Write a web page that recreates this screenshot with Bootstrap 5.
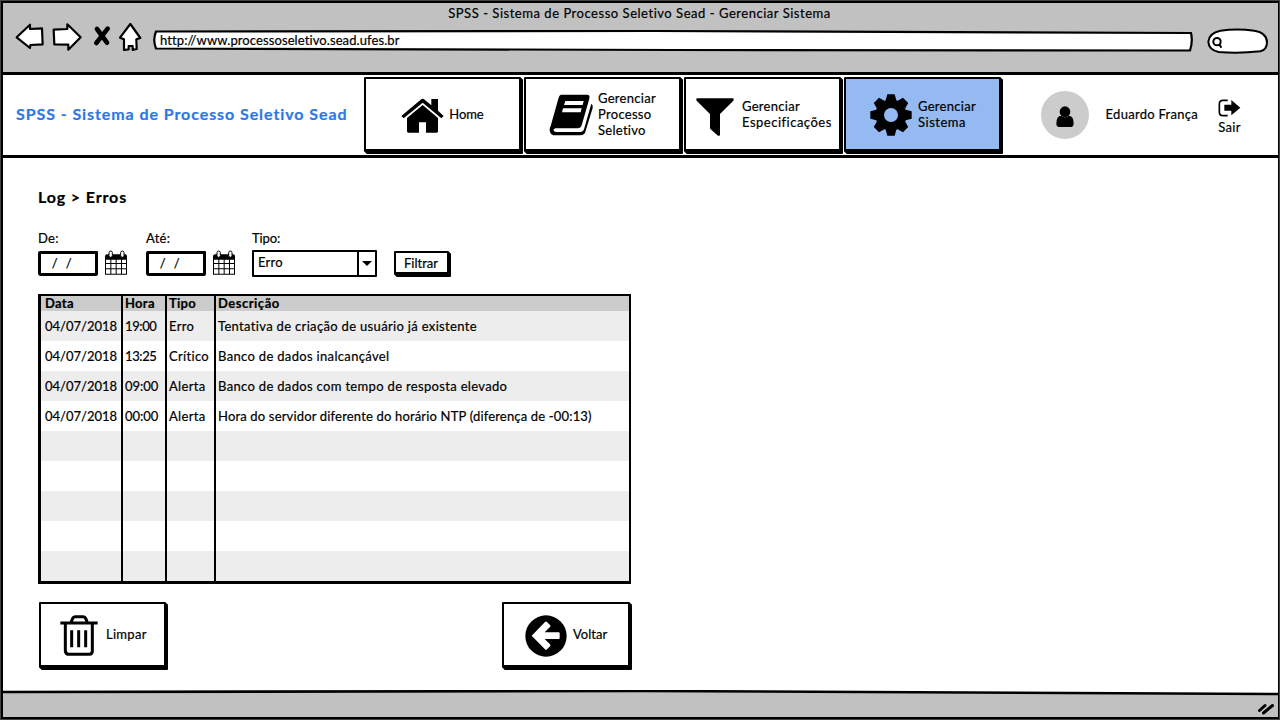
<!DOCTYPE html>
<html lang="pt-BR">
<head>
<meta charset="utf-8">
<meta name="viewport" content="width=device-width, initial-scale=1">
<title>SPSS - Gerenciar Sistema</title>
<link href="https://cdn.jsdelivr.net/npm/bootstrap@5.3.0/dist/css/bootstrap.min.css" rel="stylesheet">
<style>
  body{font-family:Lato,"Liberation Sans",sans-serif;font-size:13px;line-height:16px;color:#000;letter-spacing:.28px;font-variant-ligatures:none;-webkit-text-stroke:.2px currentColor;overflow:hidden}
  svg{display:block;flex:none}
  .mock-window{width:1280px;height:720px;border:2px solid #000;border-top-width:3px;border-left-width:3px;border-bottom-width:3px;outline:1px solid #444;outline-offset:-1px}
  .chrome{height:69px;background:#c1c1c1}
  .chrome-title{letter-spacing:.53px;padding:2px 2px 1px 0}
  .chrome-row{height:34px;padding-left:12px}
  .url-box{width:1040px;height:23px;margin:7px 0 0 11px;padding:3px 0 0 7px;letter-spacing:.1px}
  .search-pill{margin:6px 9px 0 auto}
  .top-nav{height:86px;border-top:3px solid #000;border-bottom:3px solid #000}
  .brand-text{width:361px;padding:0 0 2px 13px;font-size:16px;font-weight:700;color:#2b78e4;letter-spacing:.92px;line-height:20px}
  .sketch{border:2px solid #000;background:#fff;box-shadow:1px 1px 0 #000,2px 2px 0 #000;border-radius:1px;color:#000;border-bottom-width:3px}
  .nav-tile{width:157px;height:75px;margin:2px 3px 0 0}
  .nav-tile.current{background:#95baf1}
  .avatar{width:48px;height:48px;background:#ccc;margin-top:1px}
  .wide{letter-spacing:.5px}
  .snug{letter-spacing:-.1px}
  .tight{letter-spacing:-.4px}
  .content-area{height:535px;padding:30px 0 0 35px}
  .page-title{font-size:16px;line-height:20px;letter-spacing:.87px;font-weight:700;margin:-1px 0 23px}
  .field-label{margin-bottom:4px}
  .date-field .field-label{margin-bottom:5px}
  .date-field,.cal{margin-bottom:1px}
  .date-box{width:60px;height:25px;border:3px solid #000;padding:1px 0 0 7px;letter-spacing:.5px;border-radius:2px 1px 2px 3px;white-space:pre}
  .select-box{width:125px;height:27px;border:2px solid #000;border-radius:1px}
  .select-box .arrow-cell{width:18px;border-left:2px solid #000}
  .filter-btn{width:55px;height:24px;letter-spacing:0;padding:2px 1px 0 0!important;margin:0 0 2px 17px}
  .log-grid{width:593px;height:290px;border:3px solid #000;border-width:2px 2px 3px 3px;border-collapse:separate;border-spacing:0;margin-top:17px;table-layout:fixed}
  .log-grid th{background:#ccc;height:15px;padding:0 0 0 2px;line-height:15px}
  .log-grid td{height:30px;padding:0 0 0 2px;white-space:nowrap;letter-spacing:.33px}
  .log-grid tr:nth-child(odd) td{background:#ededed}
  .log-grid th+th,.log-grid td+td{border-left:2px solid #000}
  .log-grid td:first-child,.log-grid th:first-child{padding-left:4px}
  .log-grid .num{letter-spacing:0}
  .log-grid .tight{letter-spacing:-.4px}
  .log-grid .dense{letter-spacing:.17px}
  .action-bar{width:591px;margin:18px 0 0 1px}
  .action{height:66px}
  .status-strip{height:25px}
</style>
</head>
<body>
<svg width="0" height="0" class="position-absolute">
  <symbol id="calendar" viewBox="255 213 69 78"><path d="M255 232Q255 226 261 226H316Q321 226 321 232V287H255Z"/><path d="M258 242h13v10h-13zM274 242h13v10h-13zM290 242h13v10h-13zM306 242h12v10h-12zM258 255h13v13h-13zM274 255h13v13h-13zM290 255h13v13h-13zM306 255h12v13h-12zM258 271h13v13h-13zM274 271h13v13h-13zM290 271h13v13h-13zM306 271h12v13h-12z" fill="#fff"/><g fill="#fff" stroke="#000" stroke-width="3"><rect x="267" y="216" width="10" height="19" rx="5"/><rect x="302" y="216" width="10" height="19" rx="5"/></g></symbol>
</svg>
<div class="mock-window d-flex flex-column bg-white">
  <header class="chrome">
    <div class="chrome-title text-center">SPSS - Sistema de Processo Seletivo Sead - Gerenciar Sistema</div>
    <div class="chrome-row d-flex align-items-start">
      <svg width="127" height="30" viewBox="45 66 381 90" fill="#fff" stroke="#000" stroke-width="6.500" stroke-linejoin="round" stroke-linecap="round">
        <path d="M50 112L90 74V87L126 85L128 133L91 135L90 144Z"/>
        <path d="M161 89L202 87V73L242 112L205 149V134L163 133Z"/>
        <path d="M291 87L321 128M323 86L289 129" stroke-width="14"/><path d="M300 104H312V112H300Z" fill="#000"/>
        <path d="M391 72L421 114L409 118L410 147L398 150V138H386V148L372 150V118L360 113Z"/>
      </svg>
      <div class="url-box position-relative">
        <svg class="position-absolute top-0 start-0" width="1040" height="23" viewBox="0 0 1040 23"><path d="M3 2.500L500 2L1038 4Q1040 12 1037 21.500L520 21L3 19.500Q-.5 11 3 2.500Z" fill="#fff" stroke="#000" stroke-width="2.200"/></svg>
        <span class="position-relative">http://www.processoseletivo.sead.ufes.br</span>
      </div>
      <svg class="search-pill" width="62" height="26" viewBox="620 83 186 78" fill="#fff" stroke="#000" stroke-width="6"><path d="M624 124Q626 98 660 91Q710 84 762 91Q799 97 800 125Q800 148 780 153Q715 160 655 155Q625 148 624 124Z"/><circle cx="650" cy="124" r="11"/><path d="M657 132L663 142"/></svg>
    </div>
  </header>

  <nav class="top-nav d-flex align-items-start">
    <div class="brand-text align-self-center">SPSS - Sistema de Processo Seletivo Sead</div>
    <a class="nav-tile sketch snug d-flex align-items-center justify-content-center text-decoration-none">
      <svg width="43" height="35" viewBox="125 84 129 105" class="mt-1"><path d="M126 138L184 89Q190 84 196 89L216 106V87H236V122L253 138L246 145L190 98L133 145Z"/><path d="M143 144L190 105L236 144V184Q236 188 232 188H200V157H179V188H147Q143 188 143 184Z"/></svg>
      <span style="margin-left:5px">Home</span>
    </a>
    <a class="nav-tile sketch d-flex align-items-center justify-content-center text-decoration-none">
      <svg width="45" height="42" viewBox="566 74 135 126" style="margin-top:3px"><path fill-rule="evenodd" d="M603 76H680Q690 76 687 88L664 168Q661 177 652 177H585Q578 180 580 184Q582 188 590 188H662Q668 188 671 180L693 103Q699 107 697 116L675 188Q671 198 660 198H586Q570 198 568 184Q567 176 571 170L594 88Q597 76 603 76ZM615 95L611 107H667L670 95ZM608 117L605 129H661L664 117Z"/></svg>
      <span class="ms-1">Gerenciar<br>Processo<br>Seletivo</span>
    </a>
    <a class="nav-tile sketch d-flex align-items-center text-decoration-none">
      <svg width="38" height="39" viewBox="48 86 114 117" style="margin:8px 0 0 10px"><path d="M51 87H159Q163 90 160 94L120 134V196Q119 201 114 199L92 180Q90 178 90 175V134L50 94Q47 90 51 87Z"/></svg>
      <span class="ms-2"><span>Gerenciar</span><br><span class="wide">Especificações</span></span>
    </a>
    <a class="nav-tile sketch current d-flex align-items-center justify-content-center text-decoration-none">
      <svg width="42" height="42" viewBox="-63 -63 126 126" style="margin:3px 0 0 1px"><circle r="34" fill="none" stroke="#000" stroke-width="26"/><g id="tooth"><path d="M-16 -44L-11 -62H11L16 -44ZM-16 44L-11 62H11L16 44ZM-44 -16L-62 -11V11L-44 16ZM44 -16L62 -11V11L44 16Z"/></g><use href="#tooth" transform="rotate(45)"/></svg>
      <span style="margin-left:6px"><span>Gerenciar</span><br><span class="wide">Sistema</span></span>
    </a>
    <div class="d-flex align-items-center align-self-center ms-auto" style="margin:0 37px 1px 0">
      <span class="avatar rounded-circle d-flex align-items-center justify-content-center"><svg width="18" height="22" viewBox="165 317 54 66" class="mt-1"><circle cx="192" cy="334" r="16"/><path d="M181 346Q192 355 203 346Q218 346 218 370Q218 380 207 380H177Q166 380 166 370Q166 346 181 346Z"/></svg></span>
      <span style="margin-left:17px">Eduardo França</span>
      <span class="text-center" style="margin-left:20px;padding-top:6px"><svg width="23" height="18" viewBox="655 299 69 54" class="mx-auto"><path d="M684 303H670Q659 303 659 314V338Q659 349 670 349H684" fill="none" stroke="#000" stroke-width="5"/><path d="M674 316H695V302L722 325L695 348V334H674Z"/></svg><span class="d-block" style="margin-top:2px">Sair</span></span>
    </div>
  </nav>

  <main class="content-area">
    <h1 class="page-title">Log &gt; Erros</h1>
    <div class="d-flex align-items-end">
      <div class="date-field"><div class="field-label">De:</div><div class="date-box"> /  /</div></div>
      <svg class="cal" style="margin-left:7px" width="23" height="26"><use href="#calendar"/></svg>
      <div class="date-field" style="margin-left:18px"><div class="field-label">Até:</div><div class="date-box"> /  /</div></div>
      <svg class="cal" style="margin-left:7px" width="23" height="26"><use href="#calendar"/></svg>
      <div class="ms-3"><div class="field-label snug">Tipo:</div>
        <div class="select-box d-flex"><span class="flex-grow-1 ps-1" style="padding-top:2px">Erro</span><span class="arrow-cell d-flex align-items-center justify-content-center"><svg width="10" height="5" viewBox="0 0 10 5"><path d="M0 0H10L5 5Z"/></svg></span></div></div>
      <button class="filter-btn sketch p-0">Filtrar</button>
    </div>
    <table class="log-grid">
      <colgroup><col style="width:80px"><col style="width:44px"><col style="width:49px"><col></colgroup>
      <thead><tr><th>Data</th><th>Hora</th><th>Tipo</th><th class="wide">Descrição</th></tr></thead>
      <tbody>
        <tr><td class="num">04/07/2018</td><td class="tight">19:00</td><td>Erro</td><td>Tentativa de criação de usuário já existente</td></tr>
        <tr><td class="num">04/07/2018</td><td class="tight">13:25</td><td>Crítico</td><td>Banco de dados inalcançável</td></tr>
        <tr><td class="num">04/07/2018</td><td class="num">09:00</td><td>Alerta</td><td>Banco de dados com tempo de resposta elevado</td></tr>
        <tr><td class="num">04/07/2018</td><td class="num">00:00</td><td>Alerta</td><td class="dense">Hora do servidor diferente do horário NTP (diferença de -00:13)</td></tr>
        <tr><td></td><td></td><td></td><td></td></tr>
        <tr><td></td><td></td><td></td><td></td></tr>
        <tr><td></td><td></td><td></td><td></td></tr>
        <tr><td></td><td></td><td></td><td></td></tr>
        <tr><td></td><td></td><td></td><td></td></tr>
      </tbody>
    </table>
    <div class="action-bar d-flex justify-content-between">
      <a class="action sketch d-flex align-items-center text-decoration-none" style="width:127px">
        <svg width="38" height="42" viewBox="120 166 114 126" style="margin:3px 0 0 19px" fill="none" stroke="#000" stroke-width="9"><path d="M121 190H233M153 188L158 176Q160 171 165 171H190Q195 171 197 176L202 188M136 192V274Q137 284 147 284H208Q217 284 217 274V192M155 212V263M176 212V263M197 212V263"/></svg>
        <span class="ms-2">Limpar</span></a>
      <a class="action sketch d-flex align-items-center text-decoration-none" style="width:128px">
        <svg width="42" height="42" viewBox="136 165 126 126" style="margin:3px 0 0 21px"><circle cx="199" cy="228" r="62"/><path d="M156 227L196 186Q199 183 202 186L211 195Q214 198 211 201L195 217H237Q240 217 240 220V234Q240 237 237 237H195L211 253Q214 256 211 259L202 268Q199 271 196 268Z" fill="#fff"/></svg>
        <span style="margin-left:6px;letter-spacing:0">Voltar</span></a>
    </div>
  </main>

  <footer class="status-strip mt-auto position-relative">
    <svg class="position-absolute bottom-0 start-0" width="1275" height="27" viewBox="0 0 1275 27"><path d="M0 2L640 1L1275 4V27H0Z" fill="#c1c1c1"/><path d="M0 2L640 1L1275 4" fill="none" stroke="#000" stroke-width="2.600"/><path d="M1256.500 20.500L1262 15.500M1260.500 23L1269.500 15.500" stroke="#000" stroke-width="3" stroke-linecap="round"/></svg>
  </footer>
</div>
<script src="https://cdn.jsdelivr.net/npm/bootstrap@5.3.0/dist/js/bootstrap.bundle.min.js"></script>
</body>
</html>
